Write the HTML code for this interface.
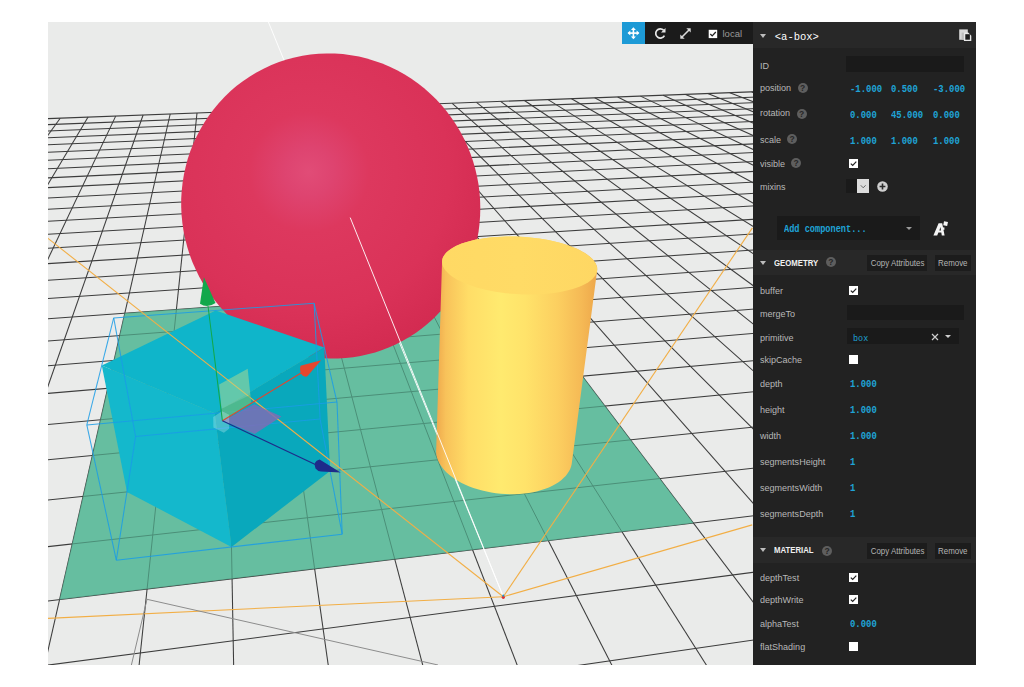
<!DOCTYPE html>
<html><head><meta charset="utf-8"><style>
html,body{margin:0;padding:0;background:#fff;font-family:"Liberation Sans",sans-serif;width:1024px;height:687px;overflow:hidden;position:relative}
#vp{position:absolute;left:0;top:0;width:1024px;height:687px}
.a{position:absolute;white-space:nowrap}
.ui{font-family:"Liberation Sans",sans-serif}
.mono{font-family:"Liberation Mono",monospace}
#panel{position:absolute;left:753px;top:22px;width:223px;height:643px;background:#222}
.hdr{position:absolute;left:0;width:223px;background:#282828}
.lbl{position:absolute;left:7px;font-family:"Liberation Sans",sans-serif;font-size:9.5px;color:#b8b8b8;line-height:1;transform:scaleX(0.95);transform-origin:0 0}
.val{position:absolute;font-family:"Liberation Mono",monospace;font-size:10.5px;color:#1fa3d6;line-height:1;transform:scaleX(0.85);transform-origin:0 0;font-weight:bold}
.help{position:absolute;width:10px;height:10px;border-radius:50%;background:#5e5e5e;color:#262626;font:bold 8.5px/10.5px "Liberation Sans",sans-serif;text-align:center}
.chk{position:absolute;left:96px;width:9px;height:9px;background:#fff}
.chk svg{position:absolute;left:0;top:0}
.inp{position:absolute;left:93px;background:#1a1a1a}
.btn{position:absolute;white-space:nowrap;background:#1c1c1c;color:#b4b4b4;font:9px/16px "Liberation Sans",sans-serif;text-align:center}
.btn span{display:inline-block;transform:scaleX(0.88)}
.tri{position:absolute;width:0;height:0;border-left:3.3px solid transparent;border-right:3.3px solid transparent;border-top:4px solid #bdbdbd}
.ctitle{position:absolute;left:21px;font:bold 9.6px/1 "Liberation Sans",sans-serif;color:#f0f0f0;transform-origin:0 0;transform:scaleX(0.81)}
</style></head><body>
<svg id="vp" width="1024" height="687" viewBox="0 0 1024 687">
<defs><clipPath id="vpclip"><rect x="48" y="22" width="928" height="643"/></clipPath>
<clipPath id="planeclip"><path d="M59.6 599.5 L693.4 523.1 L513.5 285.1 L124.8 313.2 Z"/></clipPath></defs>
<g clip-path="url(#vpclip)"><rect x="48" y="22" width="928" height="643" fill="#EAEBEA"/>
<g id="grid"><line x1="-629.1" y1="144.4" x2="-39482.6" y2="11484.9" stroke="#3c3c3c" stroke-width="1.05" opacity="1"/>
<line x1="-629.1" y1="144.4" x2="960.5" y2="83.9" stroke="#3c3c3c" stroke-width="1.05" opacity="1"/>
<line x1="-594.3" y1="143.0" x2="-38057.2" y2="11484.9" stroke="#3c3c3c" stroke-width="1.05" opacity="1"/>
<line x1="-655.6" y1="152.1" x2="977.8" y2="88.3" stroke="#3c3c3c" stroke-width="1.05" opacity="1"/>
<line x1="-559.8" y1="141.7" x2="-36631.7" y2="11484.9" stroke="#3c3c3c" stroke-width="1.05" opacity="1"/>
<line x1="-683.9" y1="160.3" x2="996.0" y2="92.9" stroke="#3c3c3c" stroke-width="1.05" opacity="1"/>
<line x1="-525.7" y1="140.4" x2="-35206.3" y2="11484.9" stroke="#3c3c3c" stroke-width="1.05" opacity="1"/>
<line x1="-714.0" y1="169.1" x2="1015.1" y2="97.8" stroke="#3c3c3c" stroke-width="1.05" opacity="1"/>
<line x1="-491.9" y1="139.2" x2="-33780.8" y2="11484.9" stroke="#3c3c3c" stroke-width="1.05" opacity="1"/>
<line x1="-746.1" y1="178.5" x2="1035.2" y2="102.8" stroke="#3c3c3c" stroke-width="1.05" opacity="1"/>
<line x1="-458.5" y1="137.9" x2="-32355.4" y2="11484.9" stroke="#3c3c3c" stroke-width="1.05" opacity="1"/>
<line x1="-780.6" y1="188.6" x2="1056.2" y2="108.2" stroke="#3c3c3c" stroke-width="1.05" opacity="1"/>
<line x1="-425.5" y1="136.6" x2="-30929.9" y2="11484.9" stroke="#3c3c3c" stroke-width="1.05" opacity="1"/>
<line x1="-817.6" y1="199.4" x2="1078.4" y2="113.8" stroke="#3c3c3c" stroke-width="1.05" opacity="1"/>
<line x1="-392.7" y1="135.4" x2="-29504.5" y2="11484.9" stroke="#3c3c3c" stroke-width="1.05" opacity="1"/>
<line x1="-857.5" y1="211.0" x2="1101.9" y2="119.7" stroke="#3c3c3c" stroke-width="1.05" opacity="1"/>
<line x1="-360.4" y1="134.2" x2="-28079.0" y2="11484.9" stroke="#3c3c3c" stroke-width="1.05" opacity="1"/>
<line x1="-900.5" y1="223.6" x2="1126.6" y2="125.9" stroke="#3c3c3c" stroke-width="1.05" opacity="1"/>
<line x1="-328.3" y1="132.9" x2="-26653.6" y2="11484.9" stroke="#3c3c3c" stroke-width="1.05" opacity="1"/>
<line x1="-947.2" y1="237.2" x2="1152.7" y2="132.6" stroke="#3c3c3c" stroke-width="1.05" opacity="1"/>
<line x1="-296.6" y1="131.7" x2="-25228.1" y2="11484.9" stroke="#3c3c3c" stroke-width="1.05" opacity="1"/>
<line x1="-997.8" y1="252.0" x2="1180.4" y2="139.6" stroke="#3c3c3c" stroke-width="1.05" opacity="1"/>
<line x1="-265.2" y1="130.5" x2="-23802.7" y2="11484.9" stroke="#3c3c3c" stroke-width="1.05" opacity="1"/>
<line x1="-1053.1" y1="268.1" x2="1209.8" y2="147.0" stroke="#3c3c3c" stroke-width="1.05" opacity="1"/>
<line x1="-234.1" y1="129.4" x2="-22377.2" y2="11484.9" stroke="#3c3c3c" stroke-width="1.05" opacity="1"/>
<line x1="-1113.7" y1="285.8" x2="1241.1" y2="154.9" stroke="#3c3c3c" stroke-width="1.05" opacity="1"/>
<line x1="-203.4" y1="128.2" x2="-20951.7" y2="11484.9" stroke="#3c3c3c" stroke-width="1.05" opacity="1"/>
<line x1="-1180.3" y1="305.2" x2="1274.4" y2="163.3" stroke="#3c3c3c" stroke-width="1.05" opacity="1"/>
<line x1="-172.9" y1="127.0" x2="-19526.3" y2="11484.9" stroke="#3c3c3c" stroke-width="1.05" opacity="1"/>
<line x1="-1253.9" y1="326.7" x2="1309.9" y2="172.3" stroke="#3c3c3c" stroke-width="1.05" opacity="1"/>
<line x1="-142.7" y1="125.9" x2="-18100.8" y2="11484.9" stroke="#3c3c3c" stroke-width="1.05" opacity="1"/>
<line x1="-1335.6" y1="350.6" x2="1347.9" y2="181.9" stroke="#3c3c3c" stroke-width="1.05" opacity="1"/>
<line x1="-112.9" y1="124.7" x2="-16675.4" y2="11485.0" stroke="#3c3c3c" stroke-width="1.05" opacity="1"/>
<line x1="-1427.0" y1="377.3" x2="1388.7" y2="192.2" stroke="#3c3c3c" stroke-width="1.05" opacity="1"/>
<line x1="-83.3" y1="123.6" x2="-15249.9" y2="11485.0" stroke="#3c3c3c" stroke-width="1.05" opacity="1"/>
<line x1="-1529.8" y1="407.2" x2="1432.5" y2="203.3" stroke="#3c3c3c" stroke-width="1.05" opacity="1"/>
<line x1="-54.1" y1="122.5" x2="-13824.5" y2="11485.0" stroke="#3c3c3c" stroke-width="1.05" opacity="1"/>
<line x1="-1646.2" y1="441.2" x2="1479.8" y2="215.3" stroke="#3c3c3c" stroke-width="1.05" opacity="1"/>
<line x1="-25.1" y1="121.4" x2="-12399.0" y2="11485.0" stroke="#3c3c3c" stroke-width="1.05" opacity="1"/>
<line x1="-1779.3" y1="480.1" x2="1530.8" y2="228.2" stroke="#3c3c3c" stroke-width="1.05" opacity="1"/>
<line x1="3.6" y1="120.3" x2="-10973.6" y2="11485.0" stroke="#3c3c3c" stroke-width="1.05" opacity="1"/>
<line x1="-1932.8" y1="524.9" x2="1586.2" y2="242.2" stroke="#3c3c3c" stroke-width="1.05" opacity="1"/>
<line x1="32.1" y1="119.2" x2="-9548.1" y2="11485.0" stroke="#3c3c3c" stroke-width="1.05" opacity="1"/>
<line x1="-2111.8" y1="577.1" x2="1646.4" y2="257.4" stroke="#3c3c3c" stroke-width="1.05" opacity="1"/>
<line x1="60.2" y1="118.2" x2="-8122.7" y2="11485.0" stroke="#3c3c3c" stroke-width="1.05" opacity="1"/>
<line x1="-2323.3" y1="638.9" x2="1712.3" y2="274.0" stroke="#3c3c3c" stroke-width="1.05" opacity="1"/>
<line x1="88.1" y1="117.1" x2="-6697.2" y2="11485.0" stroke="#3c3c3c" stroke-width="1.05" opacity="1"/>
<line x1="-2577.0" y1="712.9" x2="1784.4" y2="292.3" stroke="#3c3c3c" stroke-width="1.05" opacity="1"/>
<line x1="115.7" y1="116.1" x2="-5271.8" y2="11485.0" stroke="#3c3c3c" stroke-width="1.05" opacity="1"/>
<line x1="-2887.0" y1="803.4" x2="1864.0" y2="312.4" stroke="#3c3c3c" stroke-width="1.05" opacity="1"/>
<line x1="143.1" y1="115.0" x2="-3846.3" y2="11485.0" stroke="#3c3c3c" stroke-width="1.05" opacity="1"/>
<line x1="-3274.2" y1="916.4" x2="1952.0" y2="334.7" stroke="#3c3c3c" stroke-width="1.05" opacity="1"/>
<line x1="170.2" y1="114.0" x2="-2420.8" y2="11485.0" stroke="#3c3c3c" stroke-width="1.05" opacity="1"/>
<line x1="-3771.7" y1="1061.6" x2="2050.0" y2="359.5" stroke="#3c3c3c" stroke-width="1.05" opacity="1"/>
<line x1="197.0" y1="113.0" x2="-995.4" y2="11485.0" stroke="#3c3c3c" stroke-width="1.05" opacity="1"/>
<line x1="-4434.4" y1="1255.1" x2="2159.7" y2="387.2" stroke="#3c3c3c" stroke-width="1.05" opacity="1"/>
<line x1="223.6" y1="112.0" x2="430.1" y2="11485.0" stroke="#3c3c3c" stroke-width="1.05" opacity="1"/>
<line x1="-5361.0" y1="1525.5" x2="2283.5" y2="418.5" stroke="#3c3c3c" stroke-width="1.05" opacity="1"/>
<line x1="250.0" y1="110.9" x2="1855.5" y2="11485.0" stroke="#3c3c3c" stroke-width="1.05" opacity="1"/>
<line x1="-6748.2" y1="1930.4" x2="2424.1" y2="454.1" stroke="#3c3c3c" stroke-width="1.05" opacity="1"/>
<line x1="276.1" y1="110.0" x2="3281.0" y2="11485.0" stroke="#3c3c3c" stroke-width="1.05" opacity="1"/>
<line x1="-9053.1" y1="2603.2" x2="2585.2" y2="494.8" stroke="#3c3c3c" stroke-width="1.05" opacity="1"/>
<line x1="301.9" y1="109.0" x2="4706.4" y2="11485.0" stroke="#3c3c3c" stroke-width="1.05" opacity="1"/>
<line x1="-13636.8" y1="3941.1" x2="2771.8" y2="542.0" stroke="#3c3c3c" stroke-width="1.05" opacity="1"/>
<line x1="327.6" y1="108.0" x2="6131.9" y2="11485.0" stroke="#3c3c3c" stroke-width="1.05" opacity="1"/>
<line x1="-27181.7" y1="7894.5" x2="2990.4" y2="597.3" stroke="#3c3c3c" stroke-width="1.05" opacity="1"/>
<line x1="353.0" y1="107.0" x2="7557.3" y2="11485.0" stroke="#3c3c3c" stroke-width="1.05" opacity="1"/>
<line x1="-33999.8" y1="11484.9" x2="3249.8" y2="662.9" stroke="#3c3c3c" stroke-width="1.05" opacity="1"/>
<line x1="378.1" y1="106.1" x2="8982.8" y2="11485.0" stroke="#3c3c3c" stroke-width="1.05" opacity="1"/>
<line x1="-25972.6" y1="11484.9" x2="3562.9" y2="742.1" stroke="#3c3c3c" stroke-width="1.05" opacity="1"/>
<line x1="403.1" y1="105.1" x2="10408.2" y2="11485.0" stroke="#3c3c3c" stroke-width="1.05" opacity="1"/>
<line x1="-17945.5" y1="11484.9" x2="3948.2" y2="839.5" stroke="#3c3c3c" stroke-width="1.05" opacity="1"/>
<line x1="427.8" y1="104.2" x2="11833.7" y2="11485.0" stroke="#3c3c3c" stroke-width="1.05" opacity="1"/>
<line x1="-9918.3" y1="11485.0" x2="4433.8" y2="962.3" stroke="#3c3c3c" stroke-width="1.05" opacity="1"/>
<line x1="452.2" y1="103.3" x2="13259.1" y2="11485.0" stroke="#3c3c3c" stroke-width="1.05" opacity="1"/>
<line x1="-1891.2" y1="11485.0" x2="5064.9" y2="1121.9" stroke="#3c3c3c" stroke-width="1.05" opacity="1"/>
<line x1="476.5" y1="102.3" x2="14684.6" y2="11485.0" stroke="#3c3c3c" stroke-width="1.05" opacity="1"/>
<line x1="6136.0" y1="11485.0" x2="5918.2" y2="1337.7" stroke="#3c3c3c" stroke-width="1.05" opacity="1"/>
<line x1="500.6" y1="101.4" x2="16110.1" y2="11485.0" stroke="#3c3c3c" stroke-width="1.05" opacity="1"/>
<line x1="14163.2" y1="11485.0" x2="7136.5" y2="1645.7" stroke="#3c3c3c" stroke-width="1.05" opacity="1"/>
<line x1="524.4" y1="100.5" x2="17535.5" y2="11485.0" stroke="#3c3c3c" stroke-width="1.05" opacity="1"/>
<line x1="22190.3" y1="11485.0" x2="9017.2" y2="2121.3" stroke="#3c3c3c" stroke-width="1.05" opacity="1"/>
<line x1="548.0" y1="99.6" x2="18961.0" y2="11485.0" stroke="#3c3c3c" stroke-width="1.05" opacity="1"/>
<line x1="30217.5" y1="11485.0" x2="12302.6" y2="2952.2" stroke="#3c3c3c" stroke-width="1.05" opacity="1"/>
<line x1="571.5" y1="98.7" x2="20386.4" y2="11485.0" stroke="#3c3c3c" stroke-width="1.05" opacity="1"/>
<line x1="38244.6" y1="11485.0" x2="19504.4" y2="4773.4" stroke="#3c3c3c" stroke-width="1.05" opacity="1"/>
<line x1="594.7" y1="97.8" x2="21811.9" y2="11485.0" stroke="#3c3c3c" stroke-width="1.05" opacity="1"/>
<line x1="617.7" y1="97.0" x2="23237.3" y2="11485.0" stroke="#3c3c3c" stroke-width="1.05" opacity="1"/>
<line x1="640.5" y1="96.1" x2="24662.8" y2="11485.0" stroke="#3c3c3c" stroke-width="1.05" opacity="1"/>
<line x1="663.1" y1="95.2" x2="26088.2" y2="11485.0" stroke="#3c3c3c" stroke-width="1.05" opacity="1"/>
<line x1="685.6" y1="94.4" x2="27513.7" y2="11485.0" stroke="#3c3c3c" stroke-width="1.05" opacity="1"/>
<line x1="707.8" y1="93.5" x2="28939.1" y2="11485.0" stroke="#3c3c3c" stroke-width="1.05" opacity="1"/>
<line x1="729.8" y1="92.7" x2="30364.6" y2="11485.0" stroke="#3c3c3c" stroke-width="1.05" opacity="1"/>
<line x1="751.7" y1="91.9" x2="31790.0" y2="11485.0" stroke="#3c3c3c" stroke-width="1.05" opacity="1"/>
<line x1="773.4" y1="91.1" x2="33215.5" y2="11485.0" stroke="#3c3c3c" stroke-width="1.05" opacity="1"/>
<line x1="794.9" y1="90.2" x2="34641.0" y2="11485.0" stroke="#3c3c3c" stroke-width="1.05" opacity="1"/>
<line x1="816.2" y1="89.4" x2="36066.4" y2="11485.0" stroke="#3c3c3c" stroke-width="1.05" opacity="1"/>
<line x1="837.3" y1="88.6" x2="37491.9" y2="11485.0" stroke="#3c3c3c" stroke-width="1.05" opacity="1"/>
<line x1="858.3" y1="87.8" x2="38917.3" y2="11485.0" stroke="#3c3c3c" stroke-width="1.05" opacity="1"/>
<line x1="879.0" y1="87.0" x2="40342.8" y2="11485.0" stroke="#3c3c3c" stroke-width="1.05" opacity="1"/>
<line x1="899.6" y1="86.2" x2="41768.2" y2="11485.0" stroke="#3c3c3c" stroke-width="1.05" opacity="1"/>
<line x1="920.1" y1="85.5" x2="43193.7" y2="11485.0" stroke="#3c3c3c" stroke-width="1.05" opacity="1"/>
<line x1="940.4" y1="84.7" x2="44619.1" y2="11485.0" stroke="#3c3c3c" stroke-width="1.05" opacity="1"/>
<line x1="960.5" y1="83.9" x2="46044.6" y2="11485.0" stroke="#3c3c3c" stroke-width="1.05" opacity="1"/></g>
<path d="M59.6 599.5 L693.4 523.1 L513.5 285.1 L124.8 313.2 Z" fill="#66BEA0"/>
<g clip-path="url(#planeclip)" opacity="0.5"><line x1="-629.1" y1="144.4" x2="-39482.6" y2="11484.9" stroke="#306050" stroke-width="1.0" opacity="1"/>
<line x1="-629.1" y1="144.4" x2="960.5" y2="83.9" stroke="#306050" stroke-width="1.0" opacity="1"/>
<line x1="-594.3" y1="143.0" x2="-38057.2" y2="11484.9" stroke="#306050" stroke-width="1.0" opacity="1"/>
<line x1="-655.6" y1="152.1" x2="977.8" y2="88.3" stroke="#306050" stroke-width="1.0" opacity="1"/>
<line x1="-559.8" y1="141.7" x2="-36631.7" y2="11484.9" stroke="#306050" stroke-width="1.0" opacity="1"/>
<line x1="-683.9" y1="160.3" x2="996.0" y2="92.9" stroke="#306050" stroke-width="1.0" opacity="1"/>
<line x1="-525.7" y1="140.4" x2="-35206.3" y2="11484.9" stroke="#306050" stroke-width="1.0" opacity="1"/>
<line x1="-714.0" y1="169.1" x2="1015.1" y2="97.8" stroke="#306050" stroke-width="1.0" opacity="1"/>
<line x1="-491.9" y1="139.2" x2="-33780.8" y2="11484.9" stroke="#306050" stroke-width="1.0" opacity="1"/>
<line x1="-746.1" y1="178.5" x2="1035.2" y2="102.8" stroke="#306050" stroke-width="1.0" opacity="1"/>
<line x1="-458.5" y1="137.9" x2="-32355.4" y2="11484.9" stroke="#306050" stroke-width="1.0" opacity="1"/>
<line x1="-780.6" y1="188.6" x2="1056.2" y2="108.2" stroke="#306050" stroke-width="1.0" opacity="1"/>
<line x1="-425.5" y1="136.6" x2="-30929.9" y2="11484.9" stroke="#306050" stroke-width="1.0" opacity="1"/>
<line x1="-817.6" y1="199.4" x2="1078.4" y2="113.8" stroke="#306050" stroke-width="1.0" opacity="1"/>
<line x1="-392.7" y1="135.4" x2="-29504.5" y2="11484.9" stroke="#306050" stroke-width="1.0" opacity="1"/>
<line x1="-857.5" y1="211.0" x2="1101.9" y2="119.7" stroke="#306050" stroke-width="1.0" opacity="1"/>
<line x1="-360.4" y1="134.2" x2="-28079.0" y2="11484.9" stroke="#306050" stroke-width="1.0" opacity="1"/>
<line x1="-900.5" y1="223.6" x2="1126.6" y2="125.9" stroke="#306050" stroke-width="1.0" opacity="1"/>
<line x1="-328.3" y1="132.9" x2="-26653.6" y2="11484.9" stroke="#306050" stroke-width="1.0" opacity="1"/>
<line x1="-947.2" y1="237.2" x2="1152.7" y2="132.6" stroke="#306050" stroke-width="1.0" opacity="1"/>
<line x1="-296.6" y1="131.7" x2="-25228.1" y2="11484.9" stroke="#306050" stroke-width="1.0" opacity="1"/>
<line x1="-997.8" y1="252.0" x2="1180.4" y2="139.6" stroke="#306050" stroke-width="1.0" opacity="1"/>
<line x1="-265.2" y1="130.5" x2="-23802.7" y2="11484.9" stroke="#306050" stroke-width="1.0" opacity="1"/>
<line x1="-1053.1" y1="268.1" x2="1209.8" y2="147.0" stroke="#306050" stroke-width="1.0" opacity="1"/>
<line x1="-234.1" y1="129.4" x2="-22377.2" y2="11484.9" stroke="#306050" stroke-width="1.0" opacity="1"/>
<line x1="-1113.7" y1="285.8" x2="1241.1" y2="154.9" stroke="#306050" stroke-width="1.0" opacity="1"/>
<line x1="-203.4" y1="128.2" x2="-20951.7" y2="11484.9" stroke="#306050" stroke-width="1.0" opacity="1"/>
<line x1="-1180.3" y1="305.2" x2="1274.4" y2="163.3" stroke="#306050" stroke-width="1.0" opacity="1"/>
<line x1="-172.9" y1="127.0" x2="-19526.3" y2="11484.9" stroke="#306050" stroke-width="1.0" opacity="1"/>
<line x1="-1253.9" y1="326.7" x2="1309.9" y2="172.3" stroke="#306050" stroke-width="1.0" opacity="1"/>
<line x1="-142.7" y1="125.9" x2="-18100.8" y2="11484.9" stroke="#306050" stroke-width="1.0" opacity="1"/>
<line x1="-1335.6" y1="350.6" x2="1347.9" y2="181.9" stroke="#306050" stroke-width="1.0" opacity="1"/>
<line x1="-112.9" y1="124.7" x2="-16675.4" y2="11485.0" stroke="#306050" stroke-width="1.0" opacity="1"/>
<line x1="-1427.0" y1="377.3" x2="1388.7" y2="192.2" stroke="#306050" stroke-width="1.0" opacity="1"/>
<line x1="-83.3" y1="123.6" x2="-15249.9" y2="11485.0" stroke="#306050" stroke-width="1.0" opacity="1"/>
<line x1="-1529.8" y1="407.2" x2="1432.5" y2="203.3" stroke="#306050" stroke-width="1.0" opacity="1"/>
<line x1="-54.1" y1="122.5" x2="-13824.5" y2="11485.0" stroke="#306050" stroke-width="1.0" opacity="1"/>
<line x1="-1646.2" y1="441.2" x2="1479.8" y2="215.3" stroke="#306050" stroke-width="1.0" opacity="1"/>
<line x1="-25.1" y1="121.4" x2="-12399.0" y2="11485.0" stroke="#306050" stroke-width="1.0" opacity="1"/>
<line x1="-1779.3" y1="480.1" x2="1530.8" y2="228.2" stroke="#306050" stroke-width="1.0" opacity="1"/>
<line x1="3.6" y1="120.3" x2="-10973.6" y2="11485.0" stroke="#306050" stroke-width="1.0" opacity="1"/>
<line x1="-1932.8" y1="524.9" x2="1586.2" y2="242.2" stroke="#306050" stroke-width="1.0" opacity="1"/>
<line x1="32.1" y1="119.2" x2="-9548.1" y2="11485.0" stroke="#306050" stroke-width="1.0" opacity="1"/>
<line x1="-2111.8" y1="577.1" x2="1646.4" y2="257.4" stroke="#306050" stroke-width="1.0" opacity="1"/>
<line x1="60.2" y1="118.2" x2="-8122.7" y2="11485.0" stroke="#306050" stroke-width="1.0" opacity="1"/>
<line x1="-2323.3" y1="638.9" x2="1712.3" y2="274.0" stroke="#306050" stroke-width="1.0" opacity="1"/>
<line x1="88.1" y1="117.1" x2="-6697.2" y2="11485.0" stroke="#306050" stroke-width="1.0" opacity="1"/>
<line x1="-2577.0" y1="712.9" x2="1784.4" y2="292.3" stroke="#306050" stroke-width="1.0" opacity="1"/>
<line x1="115.7" y1="116.1" x2="-5271.8" y2="11485.0" stroke="#306050" stroke-width="1.0" opacity="1"/>
<line x1="-2887.0" y1="803.4" x2="1864.0" y2="312.4" stroke="#306050" stroke-width="1.0" opacity="1"/>
<line x1="143.1" y1="115.0" x2="-3846.3" y2="11485.0" stroke="#306050" stroke-width="1.0" opacity="1"/>
<line x1="-3274.2" y1="916.4" x2="1952.0" y2="334.7" stroke="#306050" stroke-width="1.0" opacity="1"/>
<line x1="170.2" y1="114.0" x2="-2420.8" y2="11485.0" stroke="#306050" stroke-width="1.0" opacity="1"/>
<line x1="-3771.7" y1="1061.6" x2="2050.0" y2="359.5" stroke="#306050" stroke-width="1.0" opacity="1"/>
<line x1="197.0" y1="113.0" x2="-995.4" y2="11485.0" stroke="#306050" stroke-width="1.0" opacity="1"/>
<line x1="-4434.4" y1="1255.1" x2="2159.7" y2="387.2" stroke="#306050" stroke-width="1.0" opacity="1"/>
<line x1="223.6" y1="112.0" x2="430.1" y2="11485.0" stroke="#306050" stroke-width="1.0" opacity="1"/>
<line x1="-5361.0" y1="1525.5" x2="2283.5" y2="418.5" stroke="#306050" stroke-width="1.0" opacity="1"/>
<line x1="250.0" y1="110.9" x2="1855.5" y2="11485.0" stroke="#306050" stroke-width="1.0" opacity="1"/>
<line x1="-6748.2" y1="1930.4" x2="2424.1" y2="454.1" stroke="#306050" stroke-width="1.0" opacity="1"/>
<line x1="276.1" y1="110.0" x2="3281.0" y2="11485.0" stroke="#306050" stroke-width="1.0" opacity="1"/>
<line x1="-9053.1" y1="2603.2" x2="2585.2" y2="494.8" stroke="#306050" stroke-width="1.0" opacity="1"/>
<line x1="301.9" y1="109.0" x2="4706.4" y2="11485.0" stroke="#306050" stroke-width="1.0" opacity="1"/>
<line x1="-13636.8" y1="3941.1" x2="2771.8" y2="542.0" stroke="#306050" stroke-width="1.0" opacity="1"/>
<line x1="327.6" y1="108.0" x2="6131.9" y2="11485.0" stroke="#306050" stroke-width="1.0" opacity="1"/>
<line x1="-27181.7" y1="7894.5" x2="2990.4" y2="597.3" stroke="#306050" stroke-width="1.0" opacity="1"/>
<line x1="353.0" y1="107.0" x2="7557.3" y2="11485.0" stroke="#306050" stroke-width="1.0" opacity="1"/>
<line x1="-33999.8" y1="11484.9" x2="3249.8" y2="662.9" stroke="#306050" stroke-width="1.0" opacity="1"/>
<line x1="378.1" y1="106.1" x2="8982.8" y2="11485.0" stroke="#306050" stroke-width="1.0" opacity="1"/>
<line x1="-25972.6" y1="11484.9" x2="3562.9" y2="742.1" stroke="#306050" stroke-width="1.0" opacity="1"/>
<line x1="403.1" y1="105.1" x2="10408.2" y2="11485.0" stroke="#306050" stroke-width="1.0" opacity="1"/>
<line x1="-17945.5" y1="11484.9" x2="3948.2" y2="839.5" stroke="#306050" stroke-width="1.0" opacity="1"/>
<line x1="427.8" y1="104.2" x2="11833.7" y2="11485.0" stroke="#306050" stroke-width="1.0" opacity="1"/>
<line x1="-9918.3" y1="11485.0" x2="4433.8" y2="962.3" stroke="#306050" stroke-width="1.0" opacity="1"/>
<line x1="452.2" y1="103.3" x2="13259.1" y2="11485.0" stroke="#306050" stroke-width="1.0" opacity="1"/>
<line x1="-1891.2" y1="11485.0" x2="5064.9" y2="1121.9" stroke="#306050" stroke-width="1.0" opacity="1"/>
<line x1="476.5" y1="102.3" x2="14684.6" y2="11485.0" stroke="#306050" stroke-width="1.0" opacity="1"/>
<line x1="6136.0" y1="11485.0" x2="5918.2" y2="1337.7" stroke="#306050" stroke-width="1.0" opacity="1"/>
<line x1="500.6" y1="101.4" x2="16110.1" y2="11485.0" stroke="#306050" stroke-width="1.0" opacity="1"/>
<line x1="14163.2" y1="11485.0" x2="7136.5" y2="1645.7" stroke="#306050" stroke-width="1.0" opacity="1"/>
<line x1="524.4" y1="100.5" x2="17535.5" y2="11485.0" stroke="#306050" stroke-width="1.0" opacity="1"/>
<line x1="22190.3" y1="11485.0" x2="9017.2" y2="2121.3" stroke="#306050" stroke-width="1.0" opacity="1"/>
<line x1="548.0" y1="99.6" x2="18961.0" y2="11485.0" stroke="#306050" stroke-width="1.0" opacity="1"/>
<line x1="30217.5" y1="11485.0" x2="12302.6" y2="2952.2" stroke="#306050" stroke-width="1.0" opacity="1"/>
<line x1="571.5" y1="98.7" x2="20386.4" y2="11485.0" stroke="#306050" stroke-width="1.0" opacity="1"/>
<line x1="38244.6" y1="11485.0" x2="19504.4" y2="4773.4" stroke="#306050" stroke-width="1.0" opacity="1"/>
<line x1="594.7" y1="97.8" x2="21811.9" y2="11485.0" stroke="#306050" stroke-width="1.0" opacity="1"/>
<line x1="617.7" y1="97.0" x2="23237.3" y2="11485.0" stroke="#306050" stroke-width="1.0" opacity="1"/>
<line x1="640.5" y1="96.1" x2="24662.8" y2="11485.0" stroke="#306050" stroke-width="1.0" opacity="1"/>
<line x1="663.1" y1="95.2" x2="26088.2" y2="11485.0" stroke="#306050" stroke-width="1.0" opacity="1"/>
<line x1="685.6" y1="94.4" x2="27513.7" y2="11485.0" stroke="#306050" stroke-width="1.0" opacity="1"/>
<line x1="707.8" y1="93.5" x2="28939.1" y2="11485.0" stroke="#306050" stroke-width="1.0" opacity="1"/>
<line x1="729.8" y1="92.7" x2="30364.6" y2="11485.0" stroke="#306050" stroke-width="1.0" opacity="1"/>
<line x1="751.7" y1="91.9" x2="31790.0" y2="11485.0" stroke="#306050" stroke-width="1.0" opacity="1"/>
<line x1="773.4" y1="91.1" x2="33215.5" y2="11485.0" stroke="#306050" stroke-width="1.0" opacity="1"/>
<line x1="794.9" y1="90.2" x2="34641.0" y2="11485.0" stroke="#306050" stroke-width="1.0" opacity="1"/>
<line x1="816.2" y1="89.4" x2="36066.4" y2="11485.0" stroke="#306050" stroke-width="1.0" opacity="1"/>
<line x1="837.3" y1="88.6" x2="37491.9" y2="11485.0" stroke="#306050" stroke-width="1.0" opacity="1"/>
<line x1="858.3" y1="87.8" x2="38917.3" y2="11485.0" stroke="#306050" stroke-width="1.0" opacity="1"/>
<line x1="879.0" y1="87.0" x2="40342.8" y2="11485.0" stroke="#306050" stroke-width="1.0" opacity="1"/>
<line x1="899.6" y1="86.2" x2="41768.2" y2="11485.0" stroke="#306050" stroke-width="1.0" opacity="1"/>
<line x1="920.1" y1="85.5" x2="43193.7" y2="11485.0" stroke="#306050" stroke-width="1.0" opacity="1"/>
<line x1="940.4" y1="84.7" x2="44619.1" y2="11485.0" stroke="#306050" stroke-width="1.0" opacity="1"/>
<line x1="960.5" y1="83.9" x2="46044.6" y2="11485.0" stroke="#306050" stroke-width="1.0" opacity="1"/></g>
<line x1="503.3" y1="596.7" x2="268.4" y2="22.0" stroke="#ffffff" stroke-width="1" stroke-opacity="0.9"/>
<radialGradient id="sg" gradientUnits="userSpaceOnUse" cx="309" cy="172" r="200" fx="309" fy="172"><stop offset="0" stop-color="#E14C77"/><stop offset="0.12" stop-color="#DE4470"/><stop offset="0.3" stop-color="#DD385E"/><stop offset="0.7" stop-color="#DA3258"/><stop offset="1" stop-color="#D22A50"/></radialGradient>
<path d="M181.6 215.2 L182.4 223.2 L183.6 231.2 L185.2 239.0 L187.2 246.8 L189.6 254.5 L192.4 262.0 L195.6 269.3 L199.1 276.5 L203.0 283.4 L207.2 290.1 L211.7 296.6 L216.6 302.8 L221.7 308.8 L227.2 314.5 L232.8 319.8 L238.8 324.9 L244.9 329.6 L251.3 334.0 L257.9 338.1 L264.7 341.8 L271.6 345.2 L278.6 348.2 L285.8 350.8 L293.1 353.1 L300.5 354.9 L308.0 356.4 L315.5 357.5 L323.0 358.2 L330.6 358.5 L338.1 358.5 L345.6 358.0 L353.1 357.2 L360.5 355.9 L367.9 354.3 L375.1 352.4 L382.3 350.0 L389.3 347.3 L396.1 344.2 L402.8 340.8 L409.3 337.0 L415.7 332.9 L421.8 328.5 L427.6 323.7 L433.3 318.7 L438.6 313.3 L443.7 307.7 L448.6 301.8 L453.1 295.6 L457.3 289.3 L461.2 282.7 L464.7 275.8 L467.9 268.8 L470.8 261.7 L473.3 254.3 L475.4 246.8 L477.2 239.3 L478.6 231.6 L479.5 223.8 L480.1 215.9 L480.3 208.1 L480.1 200.2 L479.5 192.3 L478.5 184.4 L477.0 176.5 L475.2 168.8 L473.0 161.1 L470.4 153.5 L467.4 146.1 L464.0 138.8 L460.2 131.6 L456.1 124.7 L451.6 118.0 L446.8 111.5 L441.6 105.3 L436.1 99.3 L430.3 93.7 L424.2 88.3 L417.8 83.3 L411.1 78.6 L404.3 74.3 L397.1 70.3 L389.8 66.8 L382.3 63.6 L374.7 60.9 L366.9 58.5 L359.0 56.6 L351.0 55.2 L342.9 54.1 L334.8 53.6 L326.7 53.4 L318.6 53.7 L310.5 54.5 L302.5 55.7 L294.5 57.4 L286.7 59.5 L279.0 62.0 L271.4 65.0 L264.1 68.4 L256.9 72.2 L249.9 76.4 L243.2 80.9 L236.7 85.8 L230.6 91.1 L224.7 96.7 L219.1 102.7 L213.9 108.9 L209.0 115.4 L204.5 122.2 L200.4 129.2 L196.6 136.4 L193.2 143.8 L190.3 151.3 L187.7 159.0 L185.6 166.9 L183.9 174.8 L182.6 182.8 L181.7 190.9 L181.2 199.0 L181.2 207.1 Z" fill="url(#sg)"/>
<linearGradient id="cg" gradientUnits="userSpaceOnUse" x1="436" y1="0" x2="598" y2="0"><stop offset="0" stop-color="#EEA84C"/><stop offset="0.06" stop-color="#F8C25A"/><stop offset="0.2" stop-color="#FFDD67"/><stop offset="0.4" stop-color="#FFEA6F"/><stop offset="0.55" stop-color="#FFE36A"/><stop offset="0.75" stop-color="#FCCF60"/><stop offset="0.9" stop-color="#F5B955"/><stop offset="1" stop-color="#EDA64A"/></linearGradient>
<path d="M442.1 260.8 L442.4 258.9 L443.1 257.1 L444.1 255.4 L445.3 253.7 L446.9 252.0 L448.8 250.4 L450.9 248.9 L453.3 247.4 L455.9 246.1 L458.8 244.8 L461.8 243.5 L465.1 242.4 L468.6 241.4 L472.3 240.4 L476.1 239.6 L480.1 238.9 L484.3 238.2 L488.5 237.7 L492.9 237.2 L497.4 236.9 L501.9 236.7 L506.5 236.5 L511.1 236.5 L515.8 236.6 L520.5 236.8 L525.2 237.1 L529.9 237.5 L534.5 238.0 L539.1 238.6 L543.7 239.3 L548.1 240.1 L552.5 241.0 L556.7 242.0 L560.8 243.1 L564.8 244.3 L568.6 245.6 L572.3 246.9 L575.7 248.3 L579.0 249.8 L582.0 251.4 L584.8 253.0 L587.3 254.7 L589.6 256.5 L591.6 258.3 L593.3 260.1 L594.7 261.9 L595.8 263.8 L596.6 265.7 L597.1 267.6 L597.2 269.5 L597.0 271.4 L571.7 463.9 L571.1 466.4 L570.2 468.9 L569.0 471.3 L567.5 473.6 L565.7 475.9 L563.5 478.1 L561.2 480.2 L558.5 482.2 L555.6 484.0 L552.4 485.8 L548.9 487.4 L545.3 488.8 L541.4 490.1 L537.4 491.3 L533.2 492.2 L528.8 493.0 L524.3 493.6 L519.7 494.0 L515.0 494.2 L510.3 494.3 L505.5 494.1 L500.8 493.8 L496.0 493.2 L491.3 492.5 L486.7 491.6 L482.2 490.6 L477.7 489.3 L473.4 487.9 L469.3 486.4 L465.4 484.7 L461.6 482.9 L458.1 480.9 L454.8 478.9 L451.7 476.7 L448.9 474.5 L446.3 472.2 L444.0 469.8 L442.0 467.3 L440.3 464.8 L438.9 462.3 L437.8 459.8 L436.9 457.3 L436.4 454.7 L436.1 452.2 L436.2 449.7 Z" fill="url(#cg)"/>
<linearGradient id="ctg" gradientUnits="userSpaceOnUse" x1="440" y1="0" x2="598" y2="0"><stop offset="0" stop-color="#FFD964"/><stop offset="0.5" stop-color="#FFDB66"/><stop offset="1" stop-color="#FED763"/></linearGradient>
<path d="M591.6 258.3 L593.3 260.1 L594.7 261.9 L595.8 263.8 L596.6 265.7 L597.1 267.6 L597.2 269.5 L597.0 271.4 L596.4 273.3 L595.5 275.2 L594.2 277.0 L592.6 278.8 L590.6 280.5 L588.3 282.2 L585.7 283.8 L582.7 285.3 L579.4 286.7 L575.8 288.0 L572.0 289.2 L567.8 290.3 L563.5 291.3 L558.9 292.2 L554.1 292.9 L549.1 293.5 L543.9 294.0 L538.7 294.3 L533.3 294.5 L527.9 294.5 L522.4 294.4 L516.9 294.1 L511.4 293.7 L506.0 293.2 L500.7 292.5 L495.4 291.7 L490.3 290.7 L485.4 289.7 L480.6 288.5 L476.0 287.2 L471.7 285.8 L467.6 284.3 L463.7 282.8 L460.2 281.1 L456.9 279.4 L454.0 277.7 L451.3 275.9 L449.0 274.0 L447.0 272.1 L445.4 270.2 L444.0 268.3 L443.1 266.4 L442.4 264.5 L442.1 262.6 L442.1 260.8 L442.4 258.9 L443.1 257.1 L444.1 255.4 L445.3 253.7 L446.9 252.0 L448.8 250.4 L450.9 248.9 L453.3 247.4 L455.9 246.1 L458.8 244.8 L461.8 243.5 L465.1 242.4 L468.6 241.4 L472.3 240.4 L476.1 239.6 L480.1 238.9 L484.3 238.2 L488.5 237.7 L492.9 237.2 L497.4 236.9 L501.9 236.7 L506.5 236.5 L511.1 236.5 L515.8 236.6 L520.5 236.8 L525.2 237.1 L529.9 237.5 L534.5 238.0 L539.1 238.6 L543.7 239.3 L548.1 240.1 L552.5 241.0 L556.7 242.0 L560.8 243.1 L564.8 244.3 L568.6 245.6 L572.3 246.9 L575.7 248.3 L579.0 249.8 L582.0 251.4 L584.8 253.0 L587.3 254.7 L589.6 256.5 Z" fill="url(#ctg)"/>
<line x1="503.3" y1="596.7" x2="350.2" y2="217.6" stroke="#ffffff" stroke-width="1" stroke-opacity="0.9"/>
<path d="M101.8 365.4 L214.7 413.2 L324.3 347.4 L215.7 310.5 Z" fill="#0FB5CA"/>
<path d="M101.8 365.4 L214.7 413.2 L231.5 547.0 L127.0 491.9 Z" fill="#14B8CC"/>
<path d="M214.7 413.2 L324.3 347.4 L330.1 470.9 L231.5 547.0 Z" fill="#09A8BC"/>
<g><line x1="135.6" y1="436.4" x2="116.3" y2="560.2" stroke="#1A9CE6" stroke-width="1.05" stroke-opacity="0.85"/><line x1="135.6" y1="436.4" x2="320.1" y2="419.1" stroke="#1A9CE6" stroke-width="1.05" stroke-opacity="0.85"/><line x1="135.6" y1="436.4" x2="113.7" y2="317.9" stroke="#1A9CE6" stroke-width="1.05" stroke-opacity="0.85"/><line x1="113.7" y1="317.9" x2="86.8" y2="424.9" stroke="#1A9CE6" stroke-width="1.05" stroke-opacity="0.85"/><line x1="116.3" y1="560.2" x2="342.2" y2="534.2" stroke="#1A9CE6" stroke-width="1.05" stroke-opacity="0.85"/><line x1="116.3" y1="560.2" x2="86.8" y2="424.9" stroke="#1A9CE6" stroke-width="1.05" stroke-opacity="0.85"/><line x1="320.1" y1="419.1" x2="342.2" y2="534.2" stroke="#1A9CE6" stroke-width="1.05" stroke-opacity="0.85"/><line x1="113.7" y1="317.9" x2="314.1" y2="303.3" stroke="#1A9CE6" stroke-width="1.05" stroke-opacity="0.85"/><line x1="320.1" y1="419.1" x2="314.1" y2="303.3" stroke="#1A9CE6" stroke-width="1.05" stroke-opacity="0.85"/><line x1="314.1" y1="303.3" x2="337.0" y2="402.1" stroke="#1A9CE6" stroke-width="1.05" stroke-opacity="0.85"/><line x1="86.8" y1="424.9" x2="337.0" y2="402.1" stroke="#1A9CE6" stroke-width="1.05" stroke-opacity="0.85"/><line x1="342.2" y1="534.2" x2="337.0" y2="402.1" stroke="#1A9CE6" stroke-width="1.05" stroke-opacity="0.85"/></g>
<line x1="503.3" y1="596.7" x2="47.6" y2="238.1" stroke="#F2AE45" stroke-width="1.1"/>
<line x1="503.3" y1="596.7" x2="752.4" y2="227.9" stroke="#F2AE45" stroke-width="1.1"/>
<line x1="503.3" y1="596.7" x2="47.6" y2="618.4" stroke="#F2AE45" stroke-width="1.1"/>
<line x1="503.3" y1="596.7" x2="752.2" y2="524.9" stroke="#F2AE45" stroke-width="1.1"/>
<line x1="147.0" y1="599.3" x2="438.0" y2="665.0" stroke="#8c8c8c" stroke-width="1"/>
<line x1="147.0" y1="599.3" x2="131.4" y2="665.0" stroke="#8c8c8c" stroke-width="1"/>
<circle cx="503.3" cy="597.3" r="1.6" fill="#e03030"/><circle cx="503.3" cy="595.6" r="1.1" fill="#1a9ad6"/>
<path d="M219.2 384.4 L247.7 368.7 L251.2 403.1 L222.7 421.1 Z" fill="#B8DC8C" fill-opacity="0.5"/>
<path d="M221 408.9 L250.1 394.9 L251.2 403.1 L222.7 421.1 Z" fill="#2AA86A" fill-opacity="0.35"/>
<path d="M223.3 420.8 L254.1 404.2 L281.5 416.5 L254.7 433.9 Z" fill="#7D6DB5" fill-opacity="0.85"/>
<path d="M213.2 417 L222.1 411.2 L229.1 414.7 L229.1 428.7 L223.9 432.8 L213.4 427.5 Z" fill="#d0f2f6" fill-opacity="0.3"/>
<line x1="222.4" y1="420.8" x2="208.0" y2="306.0" stroke="#12A84B" stroke-width="1.05"/>
<path d="M203.9 277.2 L200 303.8 Q207.5 308.5 215.5 303 Z" fill="#12A84B"/>
<line x1="222.4" y1="420.8" x2="303.5" y2="371.5" stroke="#E2452F" stroke-width="1.05"/>
<path d="M321.2 360.2 L300.5 365.8 Q299 372 302.5 375.5 Q305.5 377.5 307.5 376 Z" fill="#E5472E"/>
<line x1="222.4" y1="420.8" x2="318.5" y2="466.0" stroke="#1E2B8A" stroke-width="1.1"/>
<path d="M340.6 472.6 L319.6 459.6 Q312.5 461.5 315.5 468.5 Q318 471.5 321 471.5 Z" fill="#1E2B8A"/>
</g>
</svg>
<!-- toolbar -->
<div class="a" style="left:622px;top:22px;width:131px;height:22px;background:#1b1b1b"></div>
<div class="a" style="left:622px;top:22px;width:23px;height:22px;background:#1d9ad6"></div>
<svg class="a" style="left:622px;top:22px" width="131" height="22" viewBox="0 0 131 22">
 <g fill="#fff" stroke="none">
  <rect x="10.6" y="7" width="1.6" height="9"/><rect x="6.5" y="10.3" width="10" height="1.6"/>
  <path d="M11.4 5.2 L13.9 8 L8.9 8 Z"/><path d="M11.4 17.2 L13.9 14.4 L8.9 14.4 Z"/>
  <path d="M5.5 11.1 L8.3 8.6 L8.3 13.6 Z"/><path d="M17.4 11.1 L14.6 8.6 L14.6 13.6 Z"/>
 </g>
 <g fill="none" stroke="#e6e6e6" stroke-width="1.7">
  <path d="M41.6 8.2 A4.6 4.6 0 1 0 42.4 13.6"/>
 </g>
 <path d="M43.5 6 L43.5 10.5 L39 10.5 Z" fill="#e6e6e6"/>
 <g stroke="#d9d9d9" stroke-width="1.6" fill="none"><path d="M60 15 L67 8"/></g>
 <path d="M68.7 6.2 L68.7 10.6 L64.3 6.2 Z M58.3 16.8 L58.3 12.4 L62.7 16.8 Z" fill="#d9d9d9"/>
 <rect x="86.7" y="7.8" width="8.5" height="8.3" fill="#fff"/>
 <path d="M88.3 12 L90.2 13.9 L93.8 10" stroke="#222" stroke-width="1.3" fill="none"/>
</svg>
<div class="a ui" style="left:722.5px;top:29px;font-size:9.5px;color:#9a9a9a;line-height:10px">local</div>

<div id="panel">
 <div class="hdr" style="top:0;height:26px"></div>
 <div class="tri" style="left:7px;top:12.4px"></div>
 <div class="a mono" style="left:21.8px;top:9px;font-size:10.5px;line-height:12px;color:#ffffff;font-weight:normal">&lt;a-box&gt;</div>
 <svg class="a" style="left:205px;top:6px" width="16" height="16" viewBox="0 0 16 16">
  <rect x="1.2" y="1.4" width="8.6" height="10.4" fill="#d8d8d8"/>
  <rect x="3.6" y="4.6" width="3" height="6.6" fill="#bdbdbd"/>
  <path d="M5.9 4.6 L10.2 4.6 L13.3 7.8 L13.3 13 L5.9 13 Z" fill="#e8e8e8"/>
  <rect x="7.3" y="6.2" width="4.6" height="5.5" fill="#1c1c1c"/>
 </svg>
 <div class="lbl" style="left:6.8px;top:38.9px;font-size:9.5px">ID</div>
<div class="a" style="left:93.1px;top:34.1px;width:117.9px;height:15.7px;background:#1a1a1a"></div>
<div class="lbl" style="left:6.8px;top:61.0px;font-size:9.5px">position</div>
<div class="help" style="left:44.6px;top:61.2px">?</div>
<div class="val" style="left:96.8px;top:62.2px;font-size:10.5px">-1.000</div>
<div class="val" style="left:138.0px;top:62.2px;font-size:10.5px">0.500</div>
<div class="val" style="left:180.0px;top:62.2px;font-size:10.5px">-3.000</div>
<div class="lbl" style="left:6.8px;top:86.4px;font-size:9.5px">rotation</div>
<div class="help" style="left:43.6px;top:86.5px">?</div>
<div class="val" style="left:96.8px;top:87.6px;font-size:10.5px">0.000</div>
<div class="val" style="left:138.0px;top:87.6px;font-size:10.5px">45.000</div>
<div class="val" style="left:180.0px;top:87.6px;font-size:10.5px">0.000</div>
<div class="lbl" style="left:6.8px;top:112.5px;font-size:9.5px">scale</div>
<div class="help" style="left:34.1px;top:112.3px">?</div>
<div class="val" style="left:96.8px;top:113.7px;font-size:10.5px">1.000</div>
<div class="val" style="left:138.0px;top:113.7px;font-size:10.5px">1.000</div>
<div class="val" style="left:180.0px;top:113.7px;font-size:10.5px">1.000</div>
<div class="lbl" style="left:6.8px;top:136.6px;font-size:9.5px">visible</div>
<div class="help" style="left:38.2px;top:136.4px">?</div>
<div class="chk" style="left:95.9px;top:137.0px"><svg width="9" height="9" viewBox="0 0 9 9"><path d="M1.8 4.6 L3.7 6.5 L7.3 2.6" stroke="#222" stroke-width="1.2" fill="none"/></svg></div>
<div class="lbl" style="left:6.8px;top:160.2px;font-size:9.5px">mixins</div>
<div class="a" style="left:93.3px;top:156.8px;width:10.4px;height:14.6px;background:#1a1a1a"></div>
<div class="a" style="left:103.7px;top:156.8px;width:12.3px;height:14.6px;background:#dcdcdc"></div>
<svg class="a" style="left:103.7px;top:156.8px" width="13" height="15" viewBox="0 0 13 15"><path d="M3.8 6.3 L6.2 8.8 L8.6 6.3" stroke="#666" stroke-width="1" fill="none"/></svg>
<svg class="a" style="left:123.5px;top:158.6px" width="11" height="11" viewBox="0 0 11 11"><circle cx="5.5" cy="5.5" r="5.3" fill="#cfcfcf"/><path d="M5.5 2.6 V8.4 M2.6 5.5 H8.4" stroke="#2a2a2a" stroke-width="1.6"/></svg>
<div class="a" style="left:24.3px;top:193.8px;width:143.1px;height:24.6px;background:#1a1a1a"></div>
<div class="val" style="left:31.3px;top:201.5px;font-size:10.5px;transform:scaleX(0.82);font-weight:bold">Add component...</div>
<div class="tri" style="left:153.3px;top:205.0px;border-left-width:3.5px;border-right-width:3.5px;border-top:3.8px solid #9a9a9a"></div>
<svg class="a" style="left:179.0px;top:198.0px" width="17" height="17" viewBox="0 0 17 17"><path d="M1.4 15.6 L6.6 3.2 L10.2 3.2 L12.6 15.6 L9.8 15.6 L9.3 12.6 L6.4 12.6 L5.2 15.6 Z M7.3 10.4 L9 10.4 L8.5 7 Z" fill="#f4f4f4" fill-rule="evenodd"/><rect x="11.6" y="1.6" width="4" height="4" fill="#f4f4f4" transform="rotate(12 13.6 3.6)"/><rect x="10" y="7.4" width="2.4" height="2.4" fill="#f4f4f4"/></svg>
<div class="a" style="left:0.0px;top:227.6px;width:223.0px;height:25.4px;background:#282828"></div>
<div class="tri" style="left:7.0px;top:238.9px;border-left-width:3.3px;border-right-width:3.3px;border-top:4px solid #bdbdbd"></div>
<div class="ctitle" style="left:21.3px;top:235.5px;width:auto">GEOMETRY</div>
<div class="help" style="left:72.9px;top:235.3px">?</div>
<div class="btn" style="left:114.3px;top:233.1px;width:60.1px;height:16.0px;line-height:16.0px"><span>Copy Attributes</span></div>
<div class="btn" style="left:182.0px;top:233.1px;width:35.7px;height:16.0px;line-height:16.0px"><span>Remove</span></div>
<div class="lbl" style="left:6.8px;top:263.6px;font-size:9.5px">buffer</div>
<div class="chk" style="left:96.0px;top:264.0px"><svg width="9" height="9" viewBox="0 0 9 9"><path d="M1.8 4.6 L3.7 6.5 L7.3 2.6" stroke="#222" stroke-width="1.2" fill="none"/></svg></div>
<div class="lbl" style="left:6.8px;top:287.1px;font-size:9.5px">mergeTo</div>
<div class="a" style="left:93.5px;top:283.3px;width:117.1px;height:14.4px;background:#1a1a1a"></div>
<div class="lbl" style="left:6.8px;top:310.7px;font-size:9.5px">primitive</div>
<div class="a" style="left:93.5px;top:306.3px;width:112.2px;height:16.1px;background:#1a1a1a"></div>
<div class="a mono" style="left:100.4px;top:312.0px;font-size:9.4px;line-height:1;color:#1fa3d6;font-weight:normal;transform:scaleX(0.9);transform-origin:0 0">box</div>
<svg class="a" style="left:177.5px;top:310.8px" width="8" height="8" viewBox="0 0 8 8"><path d="M1 1 L7 7 M7 1 L1 7" stroke="#cfcfcf" stroke-width="1.2"/></svg>
<div class="tri" style="left:191.9px;top:313.2px;border-left-width:3.25px;border-right-width:3.25px;border-top:3px solid #cfcfcf"></div>
<div class="lbl" style="left:6.8px;top:332.6px;font-size:9.5px">skipCache</div>
<div class="chk" style="left:96.1px;top:333.2px"></div>
<div class="lbl" style="left:6.8px;top:356.9px;font-size:9.5px">depth</div>
<div class="val" style="left:97.0px;top:356.7px;font-size:10.5px">1.000</div>
<div class="lbl" style="left:6.8px;top:383.2px;font-size:9.5px">height</div>
<div class="val" style="left:97.0px;top:383.0px;font-size:10.5px">1.000</div>
<div class="lbl" style="left:6.8px;top:409.1px;font-size:9.5px">width</div>
<div class="val" style="left:97.0px;top:408.9px;font-size:10.5px">1.000</div>
<div class="lbl" style="left:6.8px;top:435.3px;font-size:9.5px">segmentsHeight</div>
<div class="val" style="left:97.0px;top:435.1px;font-size:10.5px">1</div>
<div class="lbl" style="left:6.8px;top:460.8px;font-size:9.5px">segmentsWidth</div>
<div class="val" style="left:97.0px;top:460.6px;font-size:10.5px">1</div>
<div class="lbl" style="left:6.8px;top:486.7px;font-size:9.5px">segmentsDepth</div>
<div class="val" style="left:97.0px;top:486.5px;font-size:10.5px">1</div>
<div class="a" style="left:0.0px;top:515.0px;width:223.0px;height:25.5px;background:#282828"></div>
<div class="tri" style="left:7.0px;top:526.4px;border-left-width:3.3px;border-right-width:3.3px;border-top:4px solid #bdbdbd"></div>
<div class="ctitle" style="left:21.3px;top:523.0px;width:auto">MATERIAL</div>
<div class="help" style="left:69.0px;top:523.5px">?</div>
<div class="btn" style="left:114.3px;top:520.5px;width:60.1px;height:16.0px;line-height:16.0px"><span>Copy Attributes</span></div>
<div class="btn" style="left:182.0px;top:520.5px;width:35.7px;height:16.0px;line-height:16.0px"><span>Remove</span></div>
<div class="lbl" style="left:6.8px;top:551.0px;font-size:9.5px">depthTest</div>
<div class="chk" style="left:96.2px;top:551.3px"><svg width="9" height="9" viewBox="0 0 9 9"><path d="M1.8 4.6 L3.7 6.5 L7.3 2.6" stroke="#222" stroke-width="1.2" fill="none"/></svg></div>
<div class="lbl" style="left:6.8px;top:572.6px;font-size:9.5px">depthWrite</div>
<div class="chk" style="left:96.2px;top:572.9px"><svg width="9" height="9" viewBox="0 0 9 9"><path d="M1.8 4.6 L3.7 6.5 L7.3 2.6" stroke="#222" stroke-width="1.2" fill="none"/></svg></div>
<div class="lbl" style="left:6.8px;top:596.8px;font-size:9.5px">alphaTest</div>
<div class="val" style="left:97.0px;top:596.6px;font-size:10.5px">0.000</div>
<div class="lbl" style="left:6.8px;top:619.9px;font-size:9.5px">flatShading</div>
<div class="chk" style="left:96.2px;top:620.1px"></div>
</div>
</body></html>
